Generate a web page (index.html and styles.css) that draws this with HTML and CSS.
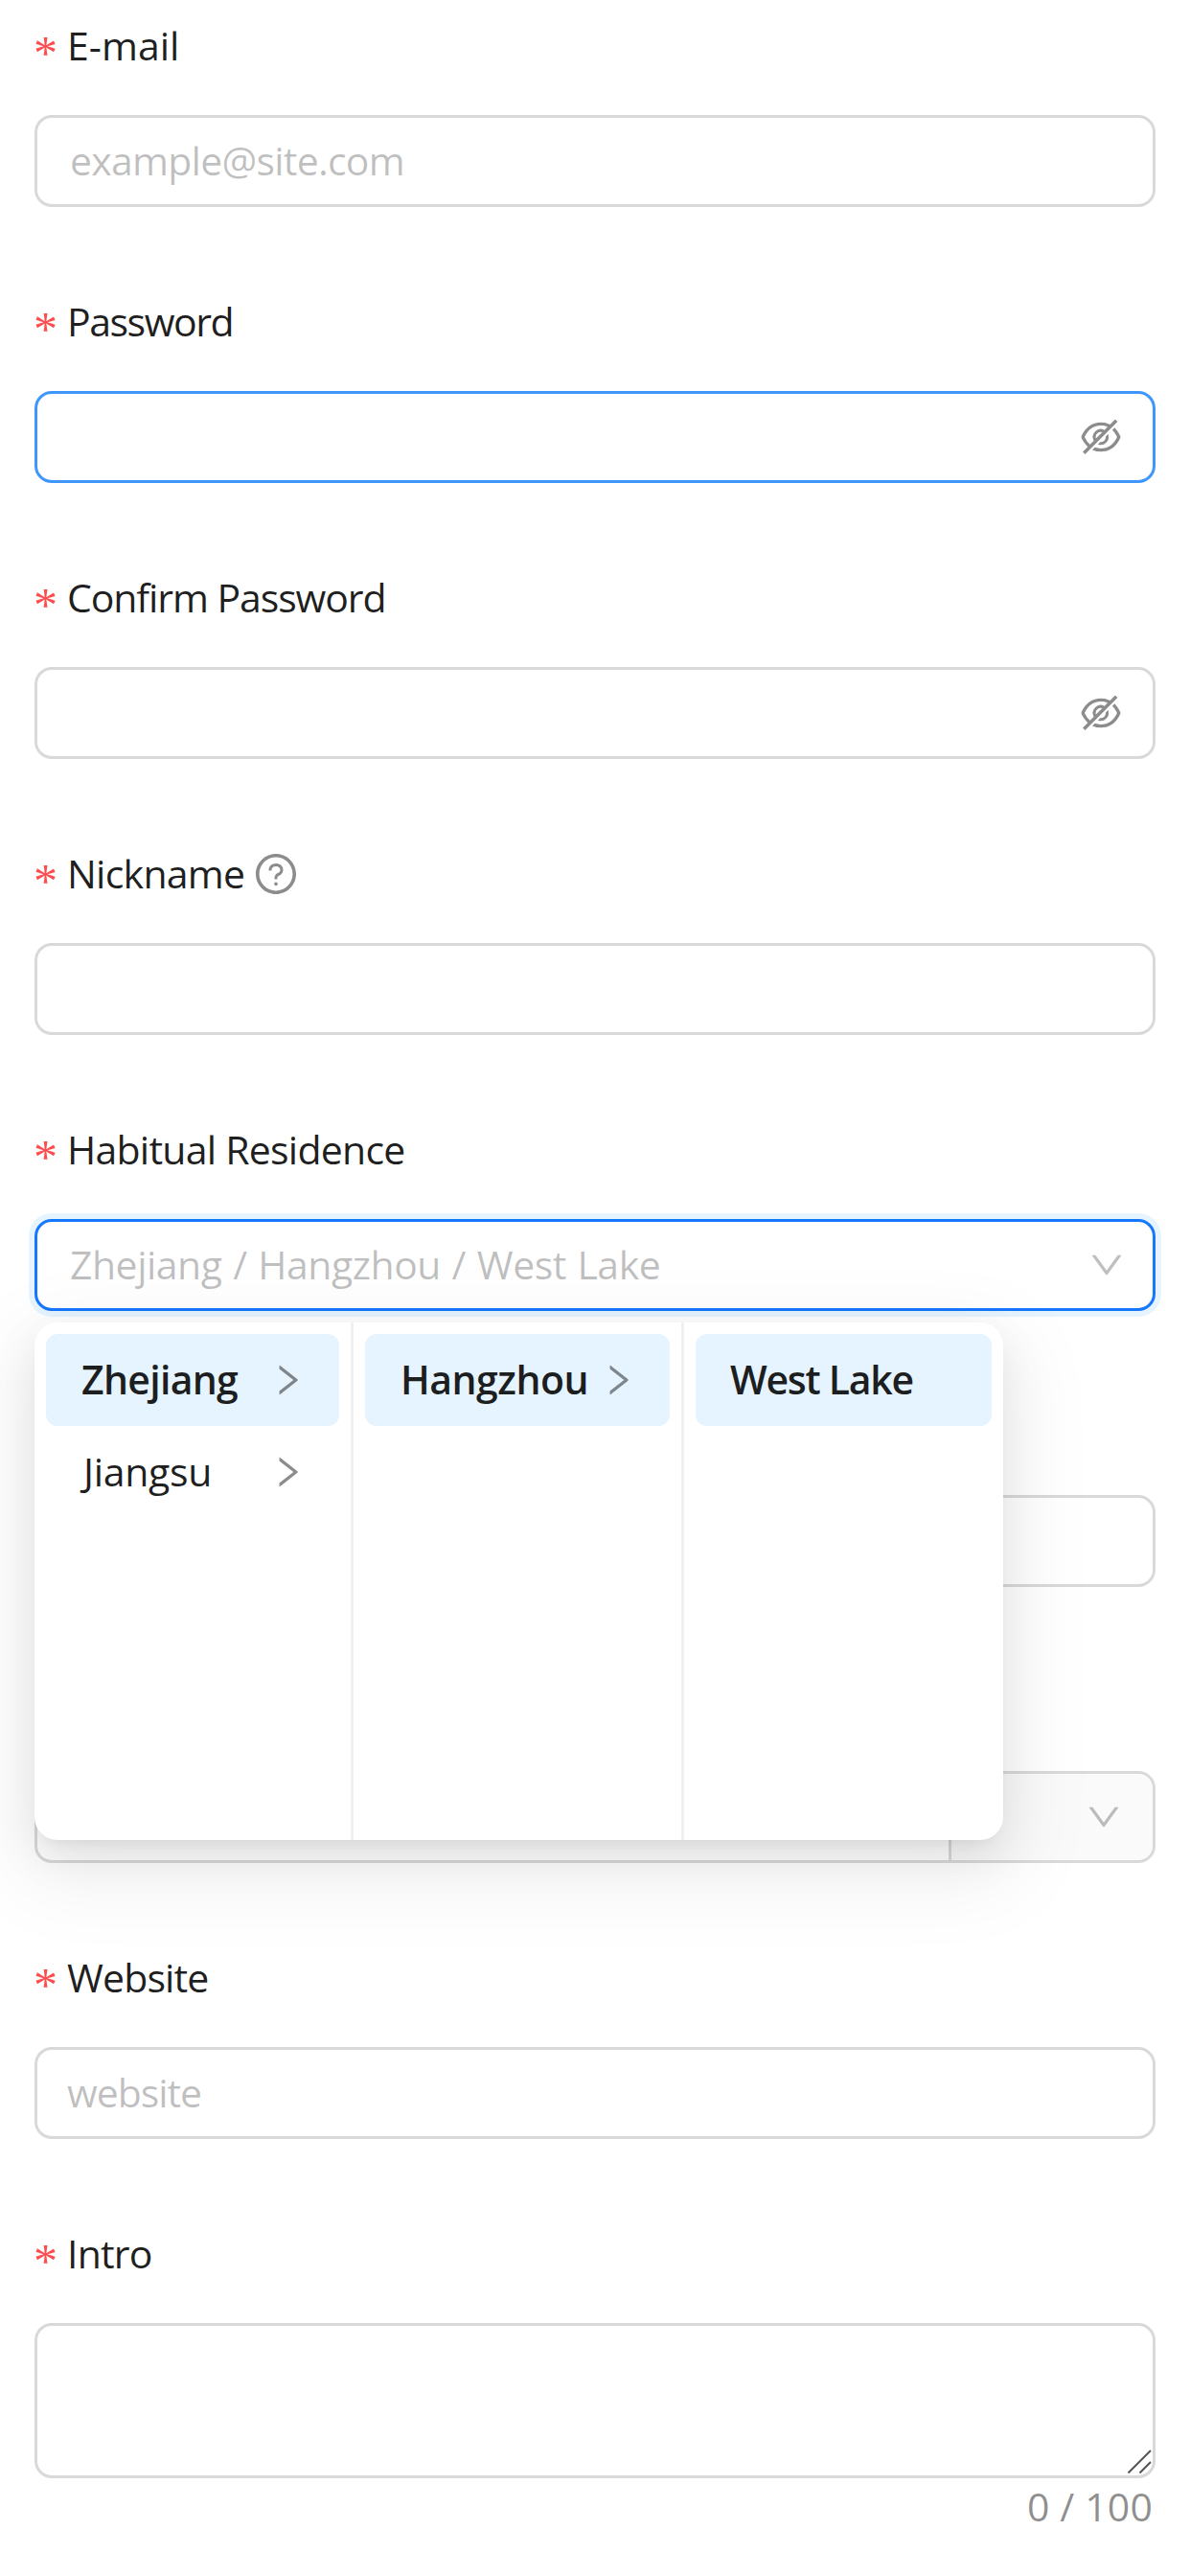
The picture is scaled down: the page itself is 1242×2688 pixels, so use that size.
FILE: index.html
```html
<!DOCTYPE html>
<html lang="en">
<head>
<meta charset="utf-8">
<title>Registration</title>
<link rel="stylesheet" href="styles.css">
</head>
<body>
<svg class="defs" aria-hidden="true">
  <symbol id="eye-off" viewBox="64 64 896 896">
    <path d="M942.2 486.2Q889.47 375.11 816.7 305l-50.88 50.88C807.31 395.53 843.45 447.4 874.7 512 791.5 684.2 673.4 766 512 766q-72.67 0-133.87-22.38L323 798.75Q408 838 512 838q288.3 0 430.2-300.3a60.29 60.29 0 000-51.5zm-63.57-320.64L836 122.88a8 8 0 00-11.32 0L715.31 232.2Q624.86 186 512 186q-288.3 0-430.2 300.3a60.3 60.3 0 000 51.5q56.69 119.4 136.5 191.41L112.48 835a8 8 0 000 11.31L155.17 889a8 8 0 0011.31 0l712.15-712.12a8 8 0 000-11.32zM149.3 512C232.6 339.8 350.7 258 512 258c54.54 0 104.13 9.36 149.12 28.39l-70.3 70.3a176 176 0 00-238.13 238.13l-83.42 83.42C223.1 637.49 183.3 582.28 149.3 512zm246.7 0a112.11 112.11 0 01146.2-106.69L401.31 546.2A112 112 0 01396 512z"/>
    <path d="M508 624c-3.46 0-6.87-.16-10.25-.47l-52.82 52.82a176.09 176.09 0 00227.42-227.42l-52.82 52.82c.31 3.38.47 6.79.47 10.25a111.94 111.94 0 01-112 112z"/>
  </symbol>
  <symbol id="question" viewBox="64 64 896 896">
    <path d="M512 64C264.6 64 64 264.6 64 512s200.6 448 448 448 448-200.6 448-448S759.4 64 512 64zm0 820c-205.4 0-372-166.6-372-372s166.6-372 372-372 372 166.6 372 372-166.6 372-372 372z"/>
    <path d="M623.6 316.7C593.6 290.4 554 276 512 276s-81.6 14.5-111.6 40.7C369.2 344 352 380.7 352 420v7.6c0 4.4 3.6 8 8 8h48c4.4 0 8-3.6 8-8V420c0-44.1 43.1-80 96-80s96 35.9 96 80c0 31.1-22 59.6-56.1 72.7-21.2 8.1-39.2 22.3-52.1 40.9-13.1 19-19.9 41.8-19.9 64.9V620c0 4.4 3.6 8 8 8h48c4.4 0 8-3.6 8-8v-22.7a48.3 48.3 0 0130.9-44.8c59-22.7 97.1-74.7 97.1-132.5.1-39.3-17.1-76-48.3-103.3zM472 732a40 40 0 1080 0 40 40 0 10-80 0z"/>
  </symbol>
  <symbol id="down" viewBox="64 64 896 896">
    <path d="M884 256h-75c-5.1 0-9.9 2.5-12.9 6.6L512 654.2 227.9 262.6c-3-4.1-7.8-6.6-12.9-6.6h-75c-6.5 0-10.3 7.4-6.5 12.7l352.6 486.1c12.8 17.6 39 17.6 51.7 0l352.6-486.1c3.9-5.3.1-12.7-6.4-12.7z"/>
  </symbol>
  <symbol id="right" viewBox="64 64 896 896">
    <path d="M765.7 486.8L314.9 134.7A7.97 7.97 0 00302 141v77.3c0 4.9 2.3 9.6 6.1 12.6l360 281.1-360 281.1c-3.9 3-6.1 7.7-6.1 12.6V883c0 6.7 7.7 10.4 12.9 6.3l450.8-352.1a31.96 31.96 0 000-50.4z"/>
  </symbol>
</svg>

<form class="form">
  <div class="item">
    <div class="label"><span class="star">*</span><span class="t-email">E-mail</span></div>
    <div class="field"><span class="placeholder t-example">example@site.com</span></div>
  </div>

  <div class="item">
    <div class="label"><span class="star">*</span><span class="t-password">Password</span></div>
    <div class="field field-hover"><svg class="icon icon-eye"><use href="#eye-off"/></svg></div>
  </div>

  <div class="item">
    <div class="label"><span class="star">*</span><span class="t-confirm">Confirm Password</span></div>
    <div class="field"><svg class="icon icon-eye"><use href="#eye-off"/></svg></div>
  </div>

  <div class="item">
    <div class="label"><span class="star">*</span><span class="t-nickname">Nickname</span><svg class="icon icon-help"><use href="#question"/></svg></div>
    <div class="field"></div>
  </div>

  <div class="item">
    <div class="label"><span class="star">*</span><span class="t-residence">Habitual Residence</span></div>
    <div class="field field-focus">
      <span class="placeholder t-path">Zhejiang / Hangzhou / West Lake</span>
      <svg class="icon icon-down"><use href="#down"/></svg>
      <div class="cascader">
        <ul class="menu menu-first">
          <li class="option selected"><span class="t-zhejiang">Zhejiang</span><svg class="icon icon-right"><use href="#right"/></svg></li>
          <li class="option"><span class="t-jiangsu">Jiangsu</span><svg class="icon icon-right"><use href="#right"/></svg></li>
        </ul>
        <ul class="menu menu-second">
          <li class="option selected"><span class="t-hangzhou">Hangzhou</span><svg class="icon icon-right"><use href="#right"/></svg></li>
        </ul>
        <ul class="menu menu-third">
          <li class="option selected"><span class="t-westlake">West Lake</span></li>
        </ul>
      </div>
    </div>
  </div>

  <div class="item">
    <div class="label"></div>
    <div class="field"></div>
  </div>

  <div class="item">
    <div class="label"></div>
    <div class="field field-group">
      <div class="addon"><svg class="icon icon-down"><use href="#down"/></svg></div>
    </div>
  </div>

  <div class="item">
    <div class="label"><span class="star">*</span><span class="t-website">Website</span></div>
    <div class="field"><span class="placeholder t-site">website</span></div>
  </div>

  <div class="item">
    <div class="label"><span class="star">*</span><span class="t-intro">Intro</span></div>
    <div class="field field-area">
      <svg class="grip" viewBox="0 0 27 27"><path d="M1.5 25.5 25 2M13.500 25.500 25 14"/></svg>
    </div>
    <div class="count">0 / 100</div>
  </div>
</form>
</body>
</html>
```
FILE: styles.css
```css
* {
  box-sizing: border-box;
}

body {
  margin: 0;
  background: #fff;
  color: rgba(0, 0, 0, 0.88);
  font-family: "Open Sans", sans-serif;
  font-size: 41px;
  line-height: 66px;
}

.defs {
  display: none;
}

.form {
  padding: 0 36px;
}

.item {
  margin-bottom: 72px;
}

.label {
  display: flex;
  align-items: center;
  height: 96px;
  padding-bottom: 2px;
  margin-bottom: 24px;
  white-space: pre;
}

.star {
  width: 35px;
  margin-left: -1px;
  padding-top: 15px;
  color: #ff4d4f;
  font-family: "Liberation Serif", serif;
  font-size: 50px;
}

.field {
  position: relative;
  display: flex;
  align-items: center;
  justify-content: space-between;
  height: 96px;
  padding: 0 33px 0 34px;
  border: 3px solid #d9d9d9;
  border-radius: 18px;
  background: #fff;
  white-space: nowrap;
}

.field-hover {
  border-color: #4096ff;
}

.field-focus {
  padding-right: 30px;
  border-color: #1677ff;
  box-shadow: 0 0 0 6px rgba(5, 145, 255, 0.1);
}

.placeholder {
  padding-bottom: 2px;
  color: rgba(0, 0, 0, 0.25);
}

.icon {
  flex: none;
  fill: currentColor;
  color: rgba(0, 0, 0, 0.45);
}

.icon-eye {
  width: 42px;
  height: 42px;
  margin-left: auto;
}

.icon-help {
  position: relative;
  top: 1px;
  width: 42px;
  height: 42px;
  margin-left: 12px;
}

.icon-down {
  width: 36px;
  height: 36px;
  color: rgba(0, 0, 0, 0.25);
}

.icon-right {
  width: 36px;
  height: 36px;
}

/* Cascader popup: overlays the fields below */
.cascader {
  position: absolute;
  z-index: 10;
  top: 105px;
  left: -3px;
  display: flex;
  width: 1011px;
  height: 540px;
  border-radius: 24px;
  background: #fff;
  box-shadow:
    0 18px 48px rgba(0, 0, 0, 0.08),
    0 9px 18px -12px rgba(0, 0, 0, 0.12),
    0 27px 84px 24px rgba(0, 0, 0, 0.05);
}

.menu {
  width: 333px;
  margin: 0;
  padding: 12px;
  list-style: none;
  border-right: 3px solid #f0f0f0;
}

.menu-second {
  width: 345px;
}

.menu-third {
  border-right: 0;
}

.option {
  display: flex;
  align-items: center;
  justify-content: space-between;
  height: 96px;
  padding: 0 36px;
  border-radius: 12px;
}

.option span {
  padding-bottom: 2px;
}

.selected {
  background: #e6f4ff;
  font-weight: 600;
}

.field-group {
  justify-content: flex-end;
  padding: 0;
}

.addon {
  display: flex;
  align-items: center;
  justify-content: flex-end;
  width: 213px;
  height: 90px;
  padding-right: 33px;
  border-left: 3px solid #d9d9d9;
  border-radius: 0 15px 15px 0;
  background: #fafafa;
}

.field-area {
  height: 162px;
}

.grip {
  position: absolute;
  right: 0;
  bottom: 1px;
  width: 27px;
  height: 27px;
  fill: none;
  stroke: #555;
  stroke-width: 2;
}

.count {
  height: 66px;
  margin-top: -4px;
  padding-right: 3px;
  color: rgba(0, 0, 0, 0.45);
  letter-spacing: 0.13px;
  text-align: right;
}

/* Tracking per string */
.t-password { letter-spacing: -1.47px; }
.t-confirm { letter-spacing: -1.09px; }
.t-nickname { letter-spacing: -0.75px; }
.t-residence { letter-spacing: -0.75px; }
.t-path { letter-spacing: -0.5px; word-spacing: 1.5px; }
.t-example { letter-spacing: -0.75px; }
.t-website { letter-spacing: -0.85px; }
.t-site { margin-left: -3px; letter-spacing: -1.05px; }
.t-intro { letter-spacing: -0.8px; }
.t-jiangsu { margin-left: 3px; letter-spacing: -0.3px; }
.t-zhejiang { margin-left: 1px; letter-spacing: -0.7px; }
.t-hangzhou { margin-left: 1px; letter-spacing: -0.51px; }
.t-westlake { letter-spacing: -1.28px; }
```
